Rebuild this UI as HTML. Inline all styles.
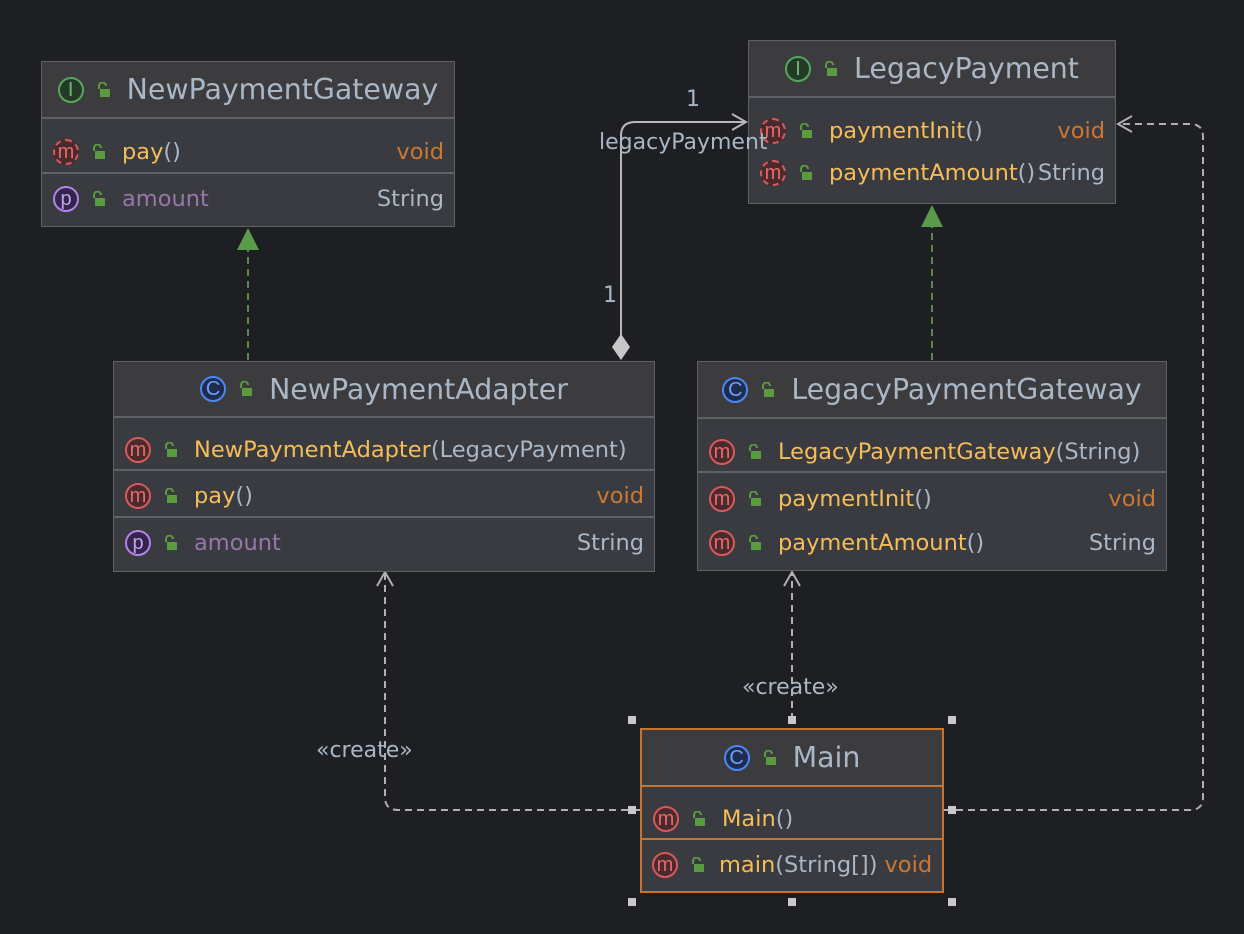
<!DOCTYPE html>
<html><head><meta charset="utf-8"><style>
body{margin:0;width:1244px;height:934px;background:#1e1f22;position:relative;overflow:hidden;font-family:"DejaVu Sans",sans-serif}
.box{position:absolute;background:#393b40;border:1px solid #5e6166;box-sizing:border-box}
.hdr{position:relative;background:#3c3c3e;border-bottom:2px solid #5e6166;box-sizing:border-box;display:flex;align-items:center;justify-content:center;color:#a9b7c6;font-size:28.4px}
.row{position:relative;box-sizing:border-box;display:flex;align-items:center;font-size:22.5px;padding-left:11px;padding-right:10px;white-space:nowrap}
.f{padding-top:13px}
.sep{border-bottom:2px solid #5e6166}
.ic{width:26px;height:26px;border-radius:50%;box-sizing:border-box;border:2px solid;display:flex;align-items:center;justify-content:center;font-size:20px;line-height:1;flex:none;font-family:"Liberation Sans",sans-serif}
.m{border-color:#d9595b;background:#4a2a2c;color:#e66a6a}
.md{border-style:dashed}
.p{border-color:#b383e8;background:#33264a;color:#c8a0f0}
.c{border-color:#4d87f0;background:#1f2c4e;color:#6aa0ff}
.i{border-color:#57a65b;background:#233a28;color:#6dbd6f}
.lk{width:14px;height:16px;margin:0 17px 0 12px;flex:none}
.nm{color:#f5bd5a}
.ty{color:#a9b7c6}
.vd{color:#cc7832;margin-left:auto}
.st{color:#a9b7c6;margin-left:auto}
.pr{color:#9876aa}
.lbl{position:absolute;color:#a9b7c6;font-size:22px}
.h{position:absolute;width:8px;height:8px;background:#c8c8c8}
</style></head><body>
<svg width="1244" height="934" style="position:absolute;left:0;top:0">
<g fill="none" stroke-width="2">
<path d="M248 360 V246" stroke="#5a8a4a" stroke-dasharray="7,5"/>
<path d="M932 360 V226" stroke="#5a8a4a" stroke-dasharray="7,5"/>
<path d="M621 340 V136 Q621 122 635 122 H746" stroke="#b8b8b8"/>
<path d="M732 114 L746 122 L732 130" stroke="#b8b8b8"/>
<path d="M640 810 H398 Q385 810 385 797 V574" stroke="#b0b0b0" stroke-dasharray="7,5"/>
<path d="M377 586 L385 572 L393 586" stroke="#b0b0b0"/>
<path d="M792 720 V574" stroke="#b0b0b0" stroke-dasharray="7,5"/>
<path d="M784 586 L792 572 L800 586" stroke="#b0b0b0"/>
<path d="M944 810 H1190 Q1203 810 1203 797 V137 Q1203 124 1190 124 H1118" stroke="#b0b0b0" stroke-dasharray="7,5"/>
<path d="M1132 116 L1118 124 L1132 132" stroke="#b0b0b0"/>
</g>
<polygon points="248,228 237,250 259,250" fill="#5a9a4a"/>
<polygon points="932,205 921,227 943,227" fill="#5a9a4a"/>
<polygon points="621,334 630,347 621,360 612,347" fill="#c8c8c8"/>
<defs><g id="lock"><path d="M3 7 V4 a3.5 3.5 0 0 1 7 0" fill="none" stroke="#5b9b3f" stroke-width="2"/><rect x="4" y="7" width="10" height="8" fill="#5b9b3f"/></g></defs>
</svg>

<div class="box" style="left:41px;top:61px;width:414px;height:166px">
<div class="hdr" style="height:57px"><div class="ic i">I</div><svg class="lk"><use href="#lock"/></svg>NewPaymentGateway</div>
<div class="row sep f" style="height:55px"><div class="ic m md">m</div><svg class="lk"><use href="#lock"/></svg><span class="nm">pay</span><span class="ty">()</span><span class="vd">void</span></div>
<div class="row" style="height:50px"><div class="ic p">p</div><svg class="lk"><use href="#lock"/></svg><span class="pr">amount</span><span class="st">String</span></div>
</div>

<div class="box" style="left:748px;top:40px;width:368px;height:164px">
<div class="hdr" style="height:57px"><div class="ic i">I</div><svg class="lk"><use href="#lock"/></svg>LegacyPayment</div>
<div class="row" style="height:55px;padding-top:10px"><div class="ic m md">m</div><svg class="lk"><use href="#lock"/></svg><span class="nm">paymentInit</span><span class="ty">()</span><span class="vd">void</span></div>
<div class="row" style="height:40px"><div class="ic m md">m</div><svg class="lk"><use href="#lock"/></svg><span class="nm">paymentAmount</span><span class="ty">()</span><span class="st">String</span></div>
</div>

<div class="box" style="left:113px;top:361px;width:542px;height:211px">
<div class="hdr" style="height:56px"><div class="ic c">C</div><svg class="lk"><use href="#lock"/></svg>NewPaymentAdapter</div>
<div class="row sep f" style="height:53px"><div class="ic m">m</div><svg class="lk"><use href="#lock"/></svg><span class="nm">NewPaymentAdapter</span><span class="ty">(LegacyPayment)</span></div>
<div class="row sep" style="height:47px;padding-top:4px"><div class="ic m">m</div><svg class="lk"><use href="#lock"/></svg><span class="nm">pay</span><span class="ty">()</span><span class="vd">void</span></div>
<div class="row" style="height:50px"><div class="ic p">p</div><svg class="lk"><use href="#lock"/></svg><span class="pr">amount</span><span class="st">String</span></div>
</div>

<div class="box" style="left:697px;top:361px;width:470px;height:210px">
<div class="hdr" style="height:57px"><div class="ic c">C</div><svg class="lk"><use href="#lock"/></svg>LegacyPaymentGateway</div>
<div class="row sep f" style="height:54px"><div class="ic m">m</div><svg class="lk"><use href="#lock"/></svg><span class="nm">LegacyPaymentGateway</span><span class="ty">(String)</span></div>
<div class="row" style="height:50px;padding-top:2px"><div class="ic m">m</div><svg class="lk"><use href="#lock"/></svg><span class="nm">paymentInit</span><span class="ty">()</span><span class="vd">void</span></div>
<div class="row" style="height:40px"><div class="ic m">m</div><svg class="lk"><use href="#lock"/></svg><span class="nm">paymentAmount</span><span class="ty">()</span><span class="st">String</span></div>
</div>

<div class="box" style="left:640px;top:728px;width:304px;height:165px;border:2px solid #c8742a">
<div class="hdr" style="height:57px;border-bottom-color:#c8742a"><div class="ic c">C</div><svg class="lk"><use href="#lock"/></svg>Main</div>
<div class="row sep f" style="height:53px;border-bottom-color:#c8742a"><div class="ic m">m</div><svg class="lk"><use href="#lock"/></svg><span class="nm">Main</span><span class="ty">()</span></div>
<div class="row" style="height:50px;padding-left:10px"><div class="ic m">m</div><svg class="lk" style="margin-right:15px"><use href="#lock"/></svg><span class="nm">main</span><span class="ty">(String[])</span><span class="vd" style="margin-left:7px">void</span></div>
</div>
<div class="h" style="left:628px;top:716px"></div><div class="h" style="left:788px;top:716px"></div><div class="h" style="left:948px;top:716px"></div>
<div class="h" style="left:628px;top:806px"></div><div class="h" style="left:948px;top:806px"></div>
<div class="h" style="left:628px;top:898px"></div><div class="h" style="left:788px;top:898px"></div><div class="h" style="left:948px;top:898px"></div>

<div class="lbl" style="left:686px;top:87px">1</div>
<div class="lbl" style="left:599px;top:130px">legacyPayment</div>
<div class="lbl" style="left:603px;top:283px">1</div>
<div class="lbl" style="left:742px;top:675px">«create»</div>
<div class="lbl" style="left:316px;top:738px">«create»</div>
</body></html>
